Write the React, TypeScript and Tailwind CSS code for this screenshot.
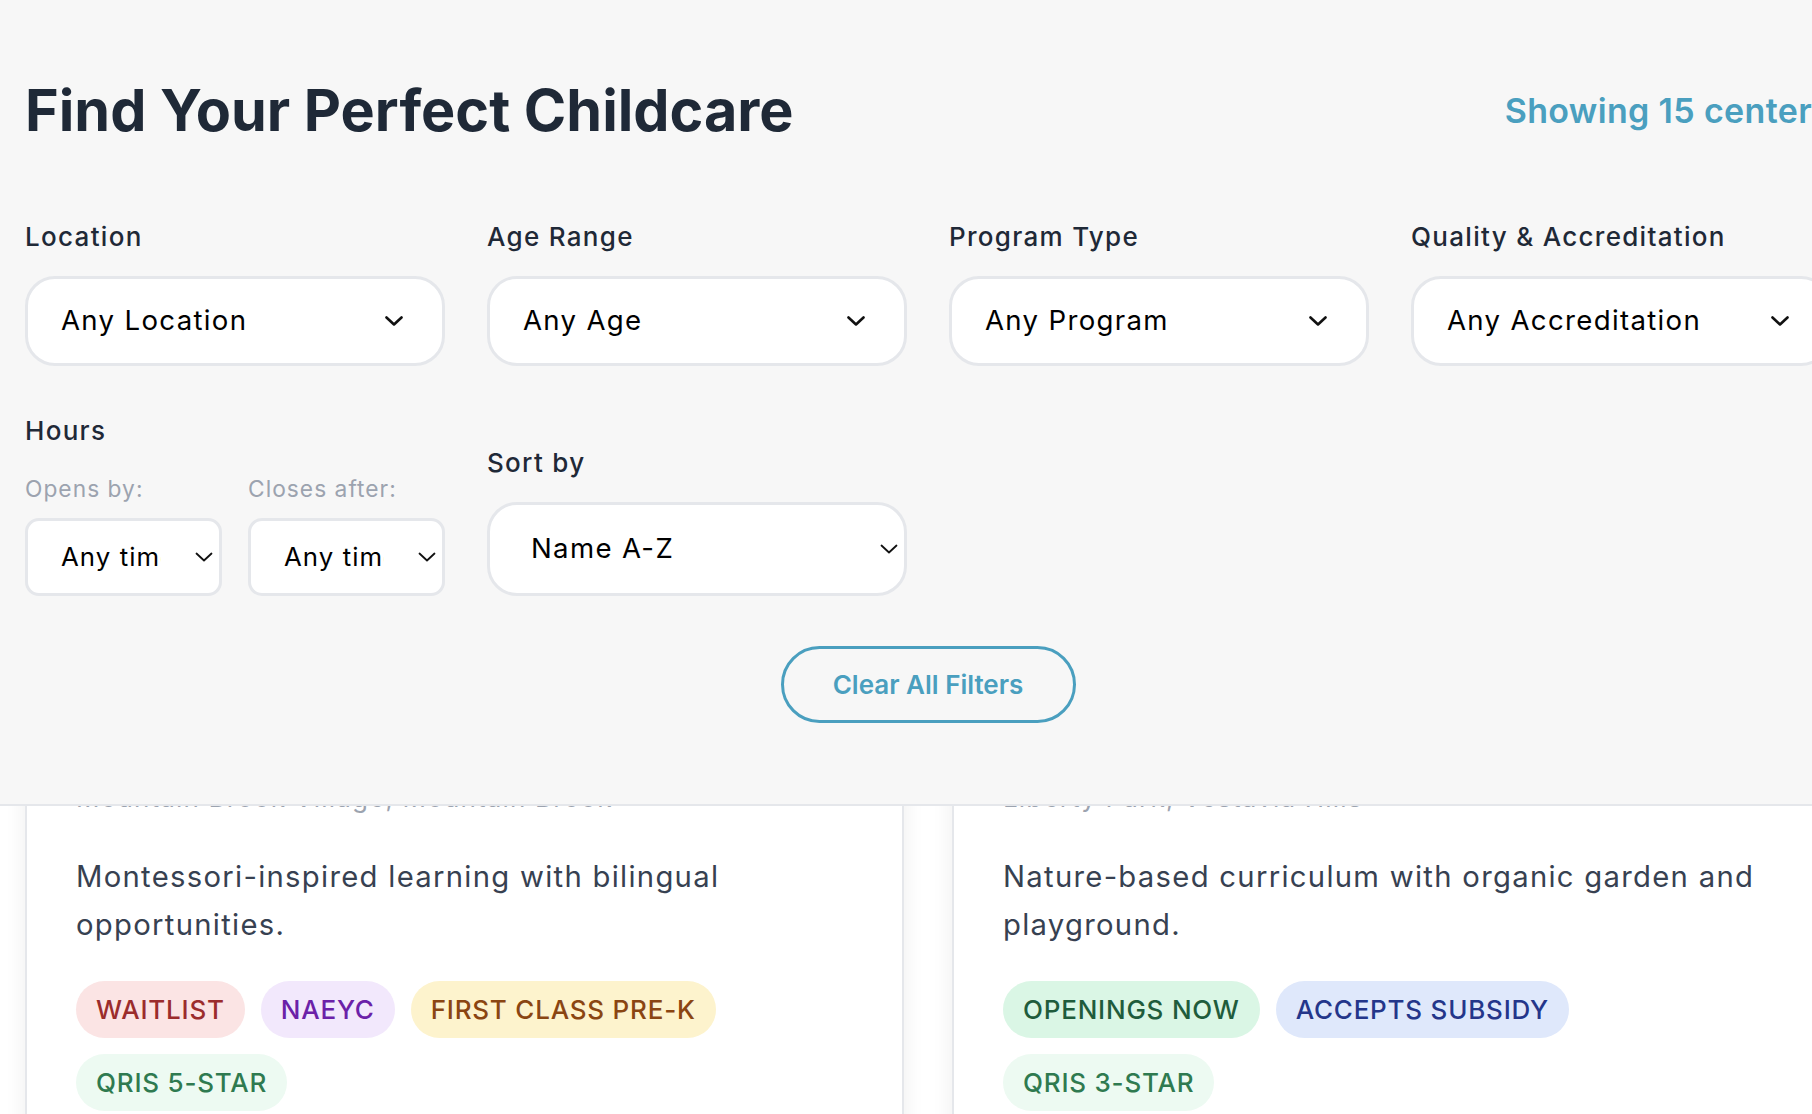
import React from 'react';

type Tag = { label: string; className: string };

interface Center {
  id: number;
  name: string;
  location: string;
  description: string;
  tags: Tag[];
}

const centers: Center[] = [
  {
    id: 1,
    name: 'Little Linguists Montessori',
    location: 'Mountain Brook Village, Mountain Brook',
    description: 'Montessori-inspired learning with bilingual opportunities.',
    tags: [
      { label: 'Waitlist', className: 'bg-[#fbe4e4] text-[#9b2c2c]' },
      { label: 'NAEYC', className: 'bg-[#f2e8fc] text-[#6b21a8]' },
      { label: 'First Class Pre-K', className: 'bg-[#fdf3cd] text-[#8a4512]' },
      { label: 'QRIS 5-Star', className: 'bg-[#edfaf2] text-[#2f7a50]' },
    ],
  },
  {
    id: 2,
    name: 'Acorn Hollow Nature School',
    location: 'Liberty Park, Vestavia Hills',
    description: 'Nature-based curriculum with organic garden and playground.',
    tags: [
      { label: 'Openings Now', className: 'bg-[#daf6e5] text-[#1f5c3c]' },
      { label: 'Accepts Subsidy', className: 'bg-[#dfe8fb] text-[#24368a]' },
      { label: 'QRIS 3-Star', className: 'bg-[#edfaf2] text-[#2f7a50]' },
    ],
  },
];

// Chevron drawn like the browser's select arrow
function Chevron({ bold = false }: { bold?: boolean }) {
  return (
    <svg width="18" height="10" viewBox="0 0 18 10" fill="none" className="shrink-0">
      <path
        d="M1.5 1.5 9 8.5l7.5-7"
        stroke="#111"
        strokeWidth={bold ? 2.6 : 1.8}
        strokeLinecap="round"
        strokeLinejoin="round"
      />
    </svg>
  );
}

const labelClass = 'text-[26px] leading-[39px] font-medium tracking-[0.05em] text-[#1f2937]';

function FilterSelect({ label, value }: { label: string; value: string }) {
  return (
    <div>
      <div className={`mb-[20px] ${labelClass}`}>{label}</div>
      <div className="flex h-[90px] items-center rounded-[30px] border-[3px] border-[#e5e7eb] bg-white pl-[33px] pr-[39px]">
        <span className="flex-1 whitespace-nowrap text-[27.6px] tracking-[0.048em] text-black">{value}</span>
        <Chevron bold />
      </div>
    </div>
  );
}

function TimeSelect({ label }: { label: string }) {
  return (
    <div>
      <div className="mb-[12px] text-[22.75px] leading-[34px] tracking-[0.045em] text-[#9ca3af]">{label}</div>
      <div className="flex h-[78px] items-center rounded-[14px] border-[3px] border-[#e5e7eb] bg-white pl-[33px] pr-[6px]">
        <span className="w-[100px] overflow-hidden whitespace-nowrap text-[25.8px] tracking-[0.041em] text-black">
          Any time
        </span>
        <span className="ml-auto">
          <Chevron />
        </span>
      </div>
    </div>
  );
}

function CenterCard({ center }: { center: Center }) {
  return (
    <div className="rounded-2xl border-2 border-[#e5e7eb] bg-white px-[49px] pt-[49px] pb-[49px] shadow-[0_4px_22px_rgba(0,0,0,0.07)]">
      <h2 className="mb-[8px] text-[36px] leading-[47px] font-semibold text-[#1f2937]">{center.name}</h2>
      <p className="text-[26px] leading-[39px] tracking-[0.045em] text-[#9ca3af]">{center.location}</p>
      <p className="mt-[36px] text-[29.25px] leading-[48px] tracking-[0.044em] text-[#374151]">{center.description}</p>
      <div className="mt-[32px] flex flex-wrap gap-[16px]">
        {center.tags.map(tag => (
          <span
            key={tag.label}
            className={`rounded-full px-[20px] py-[9px] text-[26px] leading-[39px] font-medium uppercase tracking-[0.03em] ${tag.className}`}
          >
            {tag.label}
          </span>
        ))}
      </div>
    </div>
  );
}

export default function App() {
  return (
    <div className="h-screen w-full overflow-hidden bg-white font-[family-name:Inter,sans-serif]">
      {/* Filter panel */}
      <div className="relative z-10 border-b-2 border-[#e5e7eb] bg-[#f7f7f7]">
        <div className="ml-[25px] w-[1806px] pt-[76px] pb-[81px]">
          <div className="flex items-center justify-between">
            <h1 className="text-[57.5px] leading-[68px] font-bold text-[#1f2937]">Find Your Perfect Childcare</h1>
            <p className="text-[34px] leading-[51px] font-semibold tracking-[0.01em] text-[#4a9fbf]">Showing 15 centers</p>
          </div>

          <div className="mt-[73px] grid grid-cols-4 items-end gap-x-[42px] gap-y-[45px]">
            <FilterSelect label="Location" value="Any Location" />
            <FilterSelect label="Age Range" value="Any Age" />
            <FilterSelect label="Program Type" value="Any Program" />
            <FilterSelect label="Quality & Accreditation" value="Any Accreditation" />

            {/* Hours */}
            <div>
              <div className={labelClass}>Hours</div>
              <div className="mt-[22px] grid grid-cols-2 gap-x-[26px]">
                <TimeSelect label="Opens by:" />
                <TimeSelect label="Closes after:" />
              </div>
            </div>

            {/* Sort */}
            <div>
              <div className={`mb-[20px] ${labelClass}`}>Sort by</div>
              <div className="flex h-[94px] items-center rounded-[30px] border-[3px] border-[#e5e7eb] bg-white pl-[41px] pr-[6px]">
                <span className="flex-1 whitespace-nowrap text-[27.6px] tracking-[0.048em] text-black">Name A-Z</span>
                <Chevron />
              </div>
            </div>
          </div>

          <div className="mt-[50px] flex justify-center">
            <button className="h-[77px] w-[295px] rounded-full border-[3px] border-[#4a9fbf] text-[26px] font-semibold text-[#4a9fbf]">
              Clear All Filters
            </button>
          </div>
        </div>
      </div>

      {/* Results, scrolled under the panel */}
      <div className="-mt-[134px] ml-[25px] grid w-[1806px] grid-cols-2 gap-[48px]">
        {centers.map(center => (
          <CenterCard key={center.id} center={center} />
        ))}
      </div>
    </div>
  );
}
